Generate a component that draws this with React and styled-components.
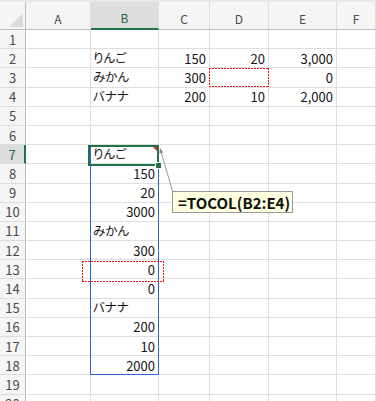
import React from 'react';
import styled, { createGlobalStyle } from 'styled-components';

const GlobalStyle = createGlobalStyle`
  html, body { margin: 0; padding: 0; background: #fff; }
  body { font-family: "Noto Sans CJK JP", "Noto Sans", sans-serif; }
  * { box-sizing: border-box; }
`;

const COLS = ['A', 'B', 'C', 'D', 'E', 'F'];
const ROW_COUNT = 20;
const ROW_H = 19.2;
const ACTIVE_COL = 'B';
const ACTIVE_ROW = 7;

// cell values keyed by row, then column
const DATA = {
  2: { B: 'りんご', C: 150, D: 20, E: '3,000' },
  3: { B: 'みかん', C: 300, E: '0' },
  4: { B: 'バナナ', C: 200, D: 10, E: '2,000' },
  7: { B: 'りんご' },
  8: { B: 150 },
  9: { B: 20 },
  10: { B: 3000 },
  11: { B: 'みかん' },
  12: { B: 300 },
  13: { B: 0 },
  14: { B: 0 },
  15: { B: 'バナナ' },
  16: { B: 200 },
  17: { B: 10 },
  18: { B: 2000 },
};

const Sheet = styled.div`
  position: relative;
  width: 376px;
  height: 401px;
  overflow: hidden;
  background: #fff;
`;

const TopStrip = styled.div`
  height: 2px;
  background: #e8e8e8;
`;

const Grid = styled.div`
  display: grid;
  grid-template-columns: 26px 65px 68px 51px 59px 68px 1fr;
  grid-template-rows: 28px repeat(${ROW_COUNT}, ${ROW_H}px);
`;

const Corner = styled.div`
  position: relative;
  background: #f5f5f5;
  border-right: 1px solid #bdbdbd;
  border-bottom: 1px solid #bdbdbd;

  &::after {
    content: '';
    position: absolute;
    right: 2px;
    bottom: 2px;
    width: 0;
    height: 0;
    border-left: 14px solid transparent;
    border-bottom: 14px solid #dadada;
  }
`;

const ColHead = styled.div`
  display: flex;
  align-items: flex-end;
  justify-content: center;
  padding-bottom: 4px;
  background: ${(p) => (p.$active ? '#dddddd' : '#f5f5f5')};
  color: ${(p) => (p.$active ? '#1d6b40' : '#4a4a4a')};
  border-right: 1px solid #dcdcdc;
  border-bottom: ${(p) => (p.$active ? '2px solid #217346' : '1px solid #bdbdbd')};
  font-size: 12px;
  line-height: 1;
`;

const RowHead = styled.div`
  display: flex;
  align-items: center;
  justify-content: center;
  background: ${(p) => (p.$active ? '#dddddd' : '#f5f5f5')};
  color: ${(p) => (p.$active ? '#1d6b40' : '#4a4a4a')};
  border-bottom: 1px solid #dcdcdc;
  border-right: ${(p) => (p.$active ? '2px solid #217346' : '1px solid #bdbdbd')};
  font-size: 13px;
  line-height: 1;
`;

const Cell = styled.div`
  display: flex;
  align-items: center;
  justify-content: ${(p) => (p.$num ? 'flex-end' : 'flex-start')};
  padding: 0 3px 0 2px;
  border-right: 1px solid #dedede;
  border-bottom: 1px solid #dedede;
  font-size: 13px;
  line-height: 1;
  color: #141414;
  white-space: nowrap;
`;

const Kana = styled.span`
  font-size: 12.5px;
  font-feature-settings: "palt";
`;

const RangeBox = styled.div`
  position: absolute;
  left: 90px;
  top: 145px;
  width: 69px;
  height: 230px;
  border: 1px solid #2e64d4;
`;

const SelectBox = styled.div`
  position: absolute;
  left: 88px;
  top: 145px;
  width: 71px;
  height: 21px;
  border: 2px solid #217346;
`;

const FillHandle = styled.div`
  position: absolute;
  left: 155px;
  top: 162px;
  width: 7px;
  height: 7px;
  background: #217346;
  border: 1px solid #fff;
`;

const CommentFlag = styled.div`
  position: absolute;
  left: 153px;
  top: 147px;
  width: 0;
  height: 0;
  border-left: 4px solid transparent;
  border-top: 4px solid #e8191f;
`;

// red dotted outline: four 1px dash strips painted as backgrounds
const DOT = '#f01818';
const DottedMark = styled.div`
  position: absolute;
  left: ${(p) => p.$x}px;
  top: ${(p) => p.$y}px;
  width: ${(p) => p.$w}px;
  height: ${(p) => p.$h}px;
  background:
    repeating-linear-gradient(90deg, ${DOT} 0 2px, transparent 2px 3px) left top / 100% 1px no-repeat,
    repeating-linear-gradient(90deg, ${DOT} 0 2px, transparent 2px 3px) left bottom / 100% 1px no-repeat,
    repeating-linear-gradient(180deg, ${DOT} 0 2px, transparent 2px 3px) left top / 1px 100% no-repeat,
    repeating-linear-gradient(180deg, ${DOT} 0 2px, transparent 2px 3px) right top / 1px 100% no-repeat;
`;

const Leader = styled.svg`
  position: absolute;
  left: 150px;
  top: 140px;
  width: 30px;
  height: 55px;
  overflow: visible;
`;

const Callout = styled.div`
  position: absolute;
  left: 172px;
  top: 191px;
  width: 121px;
  height: 22px;
  display: flex;
  align-items: center;
  padding-left: 5px;
  background: #ffffe1;
  border: 1px solid #9a9a9a;
  font-size: 15px;
  font-weight: 700;
  line-height: 1;
  color: #111;
  white-space: nowrap;
`;

function CellValue({ value }) {
  if (value === undefined) return <Cell />;
  if (typeof value === 'string' && !/^[\d,]+$/.test(value)) {
    return (
      <Cell>
        <Kana>{value}</Kana>
      </Cell>
    );
  }
  return <Cell $num>{value}</Cell>;
}

export default function App() {
  const rows = Array.from({ length: ROW_COUNT }, (_, i) => i + 1);
  return (
    <>
      <GlobalStyle />
      <Sheet>
        <TopStrip />
        <Grid>
          <Corner />
          {COLS.map((c) => (
            <ColHead key={c} $active={c === ACTIVE_COL}>
              {c}
            </ColHead>
          ))}
          {rows.map((r) => (
            <React.Fragment key={r}>
              <RowHead $active={r === ACTIVE_ROW}>{r}</RowHead>
              {COLS.map((c) => (
                <CellValue key={c} value={DATA[r] ? DATA[r][c] : undefined} />
              ))}
            </React.Fragment>
          ))}
        </Grid>

        <RangeBox />
        <SelectBox />
        <CommentFlag />
        <FillHandle />
        <DottedMark $x={209} $y={68} $w={60} $h={19} />
        <DottedMark $x={82} $y={261} $w={82} $h={21} />

        <Leader viewBox="0 0 30 55">
          <line x1="10.5" y1="10" x2="22.5" y2="51" stroke="#9a9a9a" strokeWidth="1" />
          <polygon points="10,8 13.3,12.4 9.4,13.4" fill="#8a8a8a" />
        </Leader>
        <Callout>=TOCOL(B2:E4)</Callout>
      </Sheet>
    </>
  );
}
